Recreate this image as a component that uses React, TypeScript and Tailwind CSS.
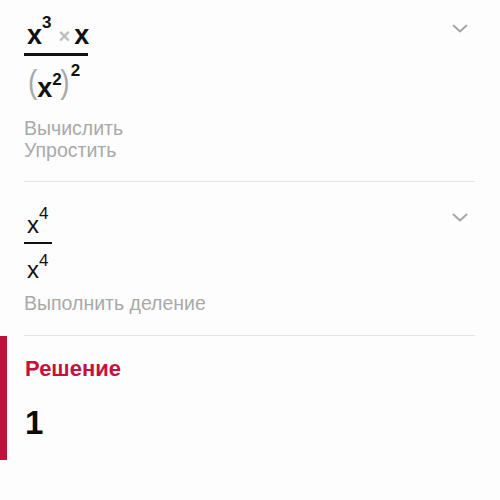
import React from "react";

function Chevron({ className }: { className?: string }) {
  return (
    <svg className={className} width="16" height="9" viewBox="0 0 16 9" fill="none">
      <polyline points="1.5,1.5 8,7.5 14.5,1.5" stroke="#a3a3a3" strokeWidth="1.8" strokeLinecap="round" strokeLinejoin="round" />
    </svg>
  );
}

function Fraction1() {
  return (
    <div className="flex w-[64px] flex-col">
      <div className="h-[30px] whitespace-nowrap pl-[3px] text-[27px] font-bold leading-[30px] text-[#111]">
        x<span className="relative -top-[16px] text-[17px]">3</span>
        <span className="relative -top-[1px] ml-[7px] mr-[4px] text-[20px] font-bold text-[#bdbdbd]">×</span>x
      </div>
      <div className="mt-[3px] h-[3px] w-full bg-[#111]" />
      <div className="mt-[14px] h-[36px] whitespace-nowrap pl-[4px] text-[27px] font-bold leading-[36px] text-[#111]">
        <span className="relative -top-[6px] inline-block scale-y-[1.2] text-[28px] font-normal text-[#a8a8a8]">(</span>
        x<span className="relative -top-[12px] inline-block w-[8px] text-[17px]">2</span>
        <span className="relative -top-[6px] inline-block scale-y-[1.2] text-[28px] font-normal text-[#a8a8a8]">)</span>
        <span className="relative -top-[21px] ml-[1px] text-[17px]">2</span>
      </div>
    </div>
  );
}

function Fraction2() {
  return (
    <div className="flex w-[28px] flex-col items-start">
      <div className="h-[26px] whitespace-nowrap pl-[3px] text-[24px] leading-[26px] text-[#111]">
        x<span className="relative -top-[14px] text-[17px]">4</span>
      </div>
      <div className="mt-[4px] h-[1.5px] w-full bg-[#111]" />
      <div className="mt-[13px] h-[26px] whitespace-nowrap pl-[3px] text-[24px] leading-[26px] text-[#111]">
        x<span className="relative -top-[12px] text-[17px]">4</span>
      </div>
    </div>
  );
}

export default function App() {
  return (
    <div className="h-[500px] w-[500px] overflow-hidden bg-[#fdfdfd] font-['Liberation_Sans',Arial,sans-serif]">
      <div className="ml-6 mr-[25px] flex justify-between border-b border-[#e4e4e4]">
        <div className="pb-[20px] pt-[20px]">
          <Fraction1 />
          <div className="mt-[11px] text-[19.5px] leading-[22px] text-[#a9a9a9]">
            <div>Вычислить</div>
            <div>Упростить</div>
          </div>
        </div>
        <Chevron className="mr-[7px] mt-[24px]" />
      </div>

      <div className="ml-6 mr-[25px] flex justify-between border-b border-[#e4e4e4]">
        <div className="pb-[21px] pt-[30px]">
          <Fraction2 />
          <div className="mt-[9px] text-[19.5px] leading-[22px] text-[#a9a9a9]">Выполнить деление</div>
        </div>
        <Chevron className="mr-[7px] mt-[31px]" />
      </div>

      <div className="flex h-[124px]">
        <div className="w-[7px] bg-[#c20f3b]" />
        <div className="ml-[18px] pt-[21px]">
          <div className="text-[22px] font-bold leading-[24px] text-[#c2123d]">Решение</div>
          <div className="mt-[24px] text-[33px] font-bold leading-[36px] text-[#0a0a0a]">1</div>
        </div>
      </div>
    </div>
  );
}
